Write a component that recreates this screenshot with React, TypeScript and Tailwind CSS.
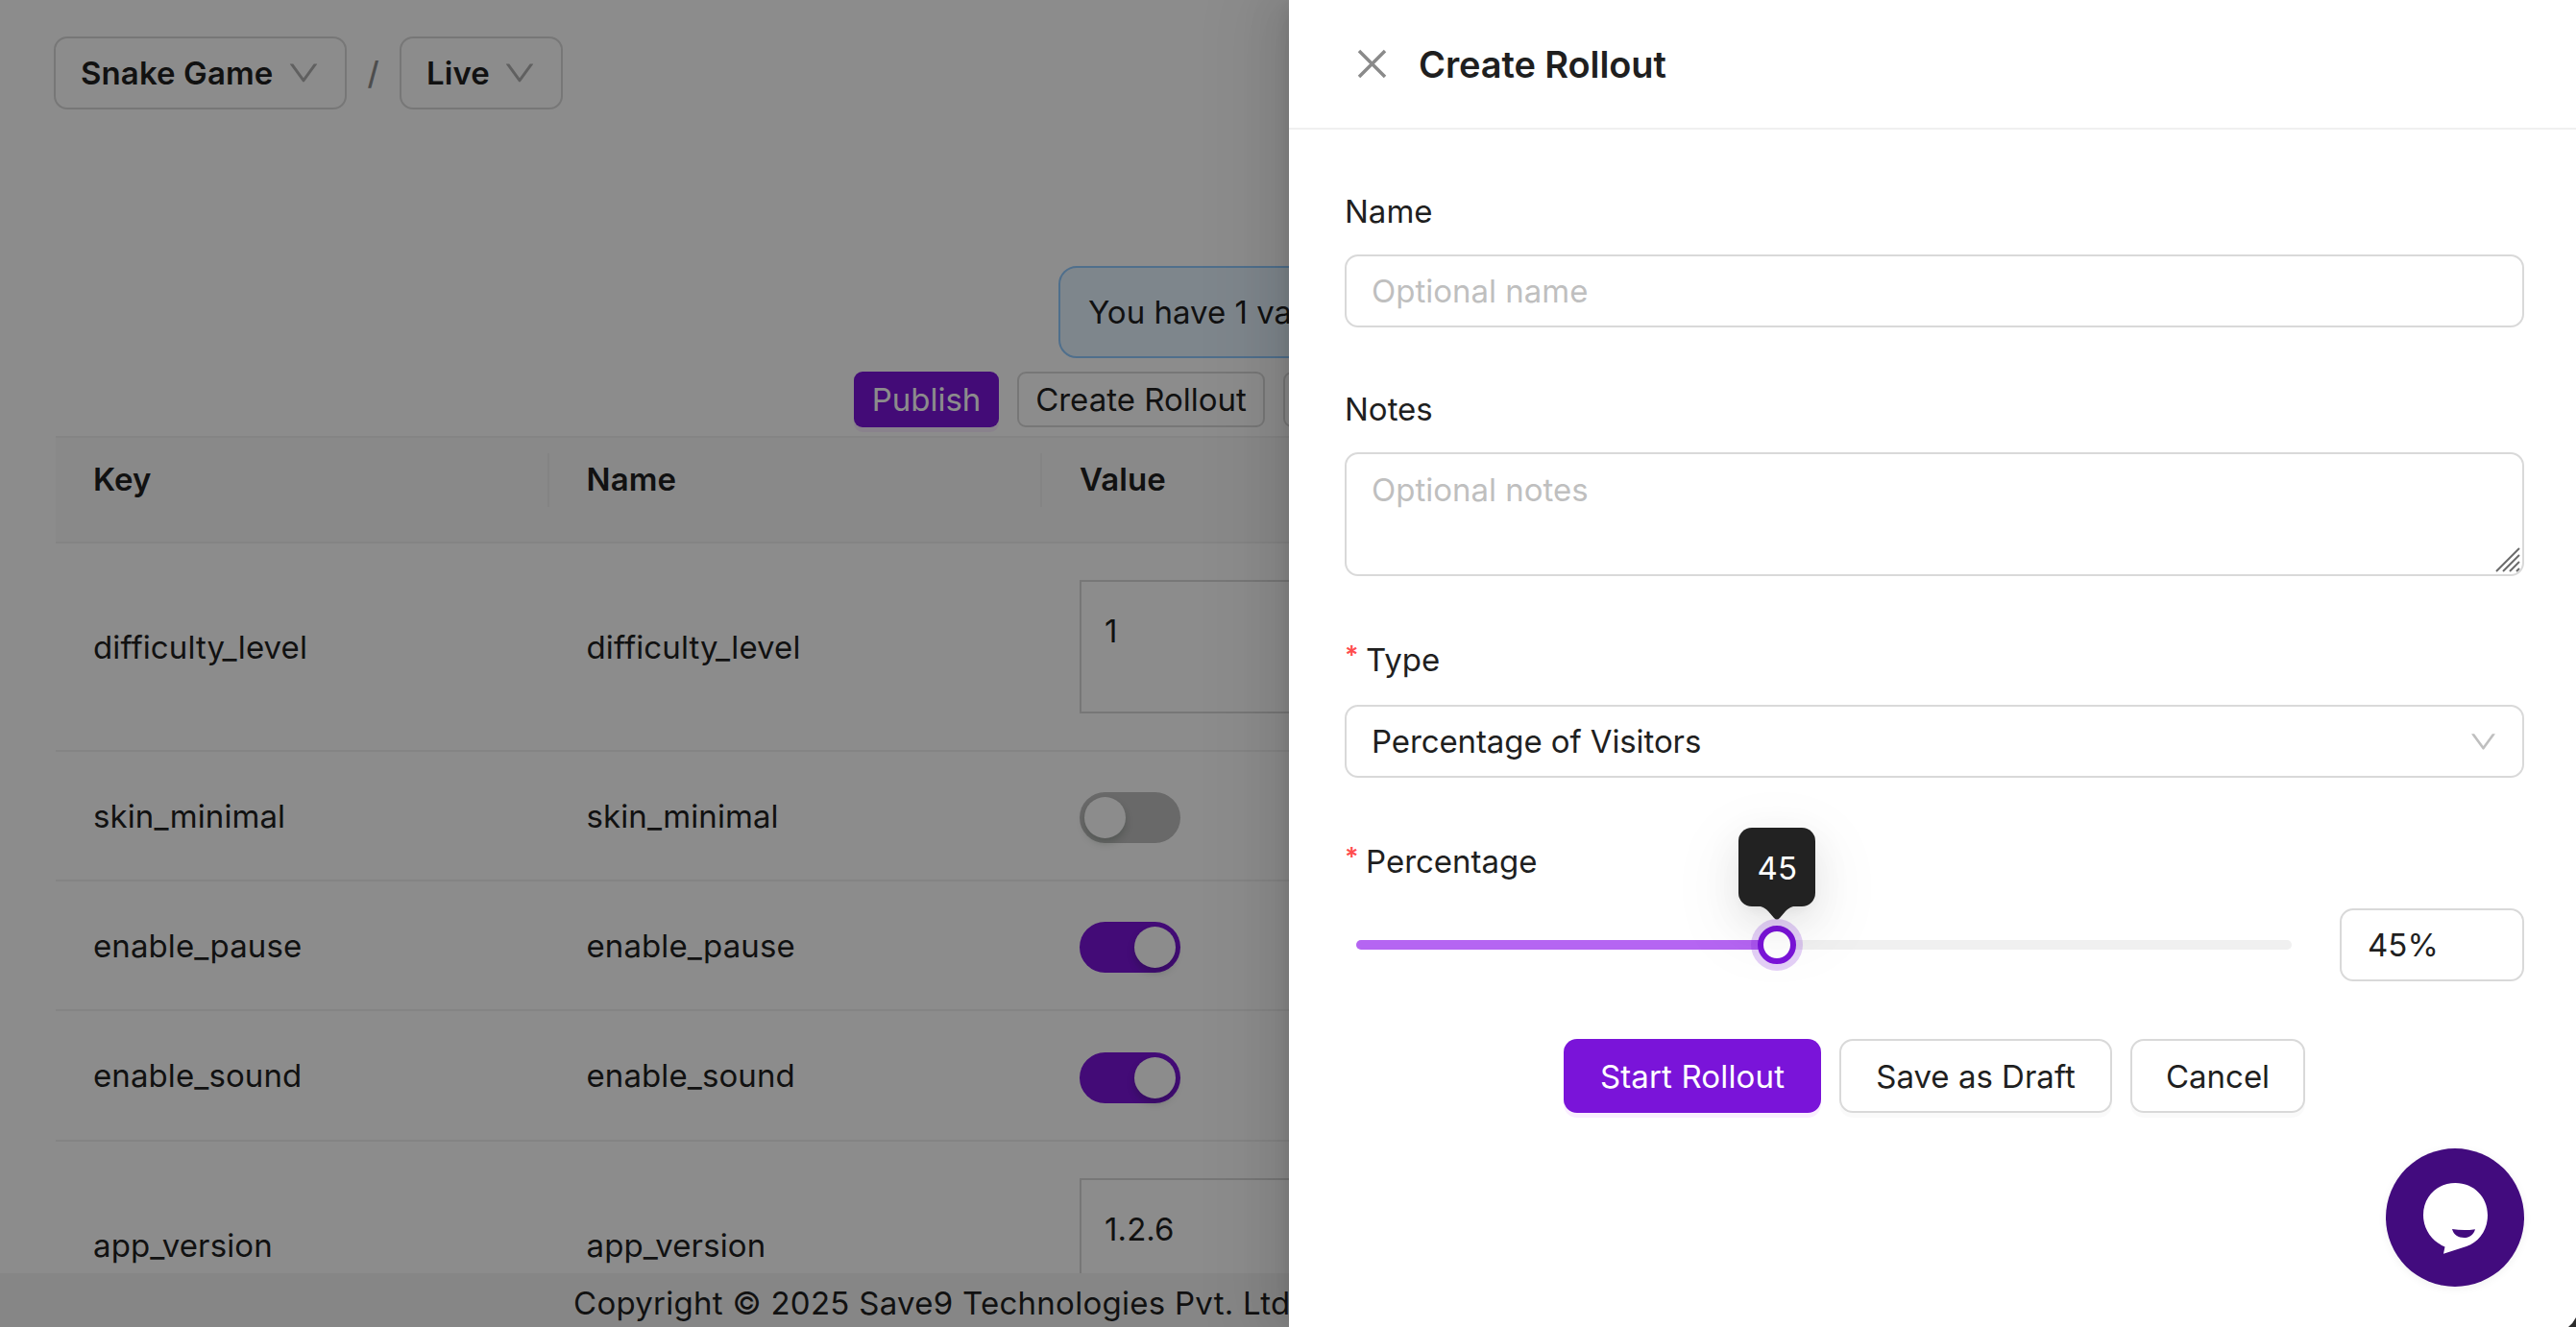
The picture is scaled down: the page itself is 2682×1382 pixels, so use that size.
import React, { useState } from 'react';
import { AiOutlineDown } from 'react-icons/ai';

const rows = [
  { key: 'difficulty_level', type: 'text', value: '1', height: 'h-[217px]' },
  { key: 'skin_minimal', type: 'switch', value: false, height: 'h-[135px]' },
  { key: 'enable_pause', type: 'switch', value: true, height: 'h-[135px]' },
  { key: 'enable_sound', type: 'switch', value: true, height: 'h-[136px]' },
  { key: 'app_version', type: 'text', value: '1.2.6', height: 'h-[217px]' },
];

function Dropdown({ label, width }: { label: string; width: string }) {
  return (
    <button
      className={`flex h-[76px] items-center justify-between rounded-[14px] border-2 border-[#d9d9d9] pr-6 pl-[26px] font-semibold tracking-[0.1px] ${width}`}
    >
      {label}
      <AiOutlineDown size={38} className="shrink-0 text-[#b0b0b0]" />
    </button>
  );
}

function Switch({ checked }: { checked: boolean }) {
  return (
    <div
      className={`mt-1 flex h-[53px] w-[105px] items-center rounded-full px-[5px] ${
        checked ? 'justify-end bg-[#7a14d9]' : 'justify-start bg-[#bfbfbf]'
      }`}
    >
      <div className="size-[43px] rounded-full bg-white shadow-[0_5px_9px_rgba(0,35,11,0.2)]" />
    </div>
  );
}

function Label({ children, required = false }: { children: React.ReactNode; required?: boolean }) {
  return (
    <div className="flex h-[50px] items-center">
      {required && (
        <span className="mr-2.5 h-[50px] w-3 text-[27px] leading-[42px] font-semibold text-[#ff4d4f]">*</span>
      )}
      {children}
    </div>
  );
}

function ConfigTable() {
  return (
    <div className="mt-[9px] ml-[58px] w-[2566px] tracking-[0.1px]">
      <div className="flex h-28 border-y-2 border-[#f0f0f0] bg-[#fafafa] font-semibold">
        {['Key', 'Name', 'Value'].map((title) => (
          <div key={title} className="flex w-[513.5px] justify-between pt-4">
            <span className="pl-[39px] leading-[54px]">{title}</span>
            <span className="h-14 w-0.5 bg-[#f0f0f0]" />
          </div>
        ))}
      </div>
      {rows.map((row) => (
        <div key={row.key} className={`flex items-center border-b-2 border-[#f0f0f0] ${row.height}`}>
          <div className="w-[513.5px] pl-[39px]">{row.key}</div>
          <div className="w-[513.5px] pl-[39px]">{row.key}</div>
          <div className="pl-[39px]">
            {row.type === 'text' ? (
              <div className="h-[139px] w-[600px] border-2 border-[#d9d9d9] px-6 pt-[25px] leading-[52px]">
                {row.value}
              </div>
            ) : (
              <Switch checked={row.value as boolean} />
            )}
          </div>
        </div>
      ))}
    </div>
  );
}

function PercentSlider({ value }: { value: number }) {
  return (
    <div className="relative ml-3 h-2.5 w-[974px] rounded-full bg-[#f0f0f0]">
      <div className="h-2.5 rounded-full bg-[#b565f2]" style={{ width: `${value}%` }} />
      <div
        className="absolute top-1/2 size-10 -translate-x-1/2 -translate-y-1/2 rounded-full border-[6px] border-[#7a14d9] bg-white shadow-[0_0_0_7px_rgba(122,20,217,0.2)]"
        style={{ left: `${value}%` }}
      />
      <div
        className="absolute -top-[117px] flex h-[82px] w-20 -translate-x-1/2 items-center justify-center rounded-[14px] bg-[#222] pt-0.5 text-white shadow-[0_14px_38px_rgba(0,0,0,0.08),0_7px_14px_-9px_rgba(0,0,0,0.12),0_21px_66px_19px_rgba(0,0,0,0.04)]"
        style={{ left: `${value}%` }}
      >
        {value}
        <svg className="absolute top-[82px]" width="34" height="14" viewBox="0 0 34 14">
          <path d="M0 0H34C30 1 28 3 26 5L20 12Q17 15 14 12L8 5C6 3 4 1 0 0Z" fill="#222" />
        </svg>
      </div>
    </div>
  );
}

function RolloutDrawer() {
  const [percentage] = useState(45);

  return (
    <aside className="absolute inset-y-0 right-0 w-[1340px] bg-white shadow-[-14px_0_38px_rgba(0,0,0,0.08),-7px_0_14px_-9px_rgba(0,0,0,0.12),-21px_0_66px_19px_rgba(0,0,0,0.05)]">
      <header className="flex h-[135px] items-center border-b-2 border-[#f0f0f0] pl-[71px]">
        <svg width="31" height="31" viewBox="0 0 31 31" fill="none" stroke="#8a8a8a" strokeWidth="3.5">
          <path d="M2 2L29 29M29 2L2 29" />
        </svg>
        <h2 className="ml-[33px] text-[38px] font-semibold tracking-[-0.1px]">Create Rollout</h2>
      </header>

      <form className="pt-[60px] pr-[54px] pl-[58px]">
        <Label>Name</Label>
        <input
          className="mt-5 block h-[76px] w-full rounded-[14px] border-2 border-[#d9d9d9] px-[26px] placeholder:text-[#bfbfbf]"
          placeholder="Optional name"
        />

        <div className="mt-[60px]">
          <Label>Notes</Label>
          <div className="relative mt-5">
            <textarea
              className="block h-[129px] w-full resize-none rounded-[14px] border-2 border-[#d9d9d9] px-[26px] pt-[11px] leading-[52px] placeholder:text-[#bfbfbf]"
              placeholder="Optional notes"
            />
            {/* Resize grip */}
            <svg
              className="absolute right-1 bottom-1"
              width="26"
              height="26"
              viewBox="0 0 26 26"
              stroke="#6b6b6b"
              strokeWidth="2"
            >
              <path d="M1 25L25 1M8 25L25 8M15 25L25 15M22 25L25 22" />
            </svg>
          </div>
        </div>

        <div className="mt-[62px]">
          <Label required>Type</Label>
          <div className="mt-[22px] flex h-[76px] items-center justify-between rounded-[14px] border-2 border-[#d9d9d9] pr-6 pl-[26px] tracking-[-0.1px]">
            Percentage of Visitors
            <AiOutlineDown size={33} className="text-[#bfbfbf]" />
          </div>
        </div>

        <div className="mt-[62px]">
          <Label required>Percentage</Label>
          <div className="mt-6 flex items-center justify-between">
            <PercentSlider value={percentage} />
            <div className="flex h-[76px] w-48 items-center rounded-[14px] border-2 border-[#d9d9d9] pl-[27px]">
              {percentage}%
            </div>
          </div>
        </div>

        <div className="mt-[60px] flex justify-center gap-[19px]">
          <button
            type="button"
            className="h-[77px] w-[268px] rounded-[14px] bg-[#7a14d9] tracking-[0.15px] text-white shadow-[0_5px_0_rgba(185,5,255,0.07)]"
          >
            Start Rollout
          </button>
          <button
            type="button"
            className="h-[77px] w-[284px] rounded-[14px] border-2 border-[#d9d9d9] shadow-[0_5px_0_rgba(0,0,0,0.02)]"
          >
            Save as Draft
          </button>
          <button
            type="button"
            className="h-[77px] w-[182px] rounded-[14px] border-2 border-[#d9d9d9] shadow-[0_5px_0_rgba(0,0,0,0.02)]"
          >
            Cancel
          </button>
        </div>
      </form>
    </aside>
  );
}

function ChatButton() {
  return (
    <button className="absolute right-[54px] bottom-[42px] size-36 rounded-full bg-[#420b7e] shadow-[0_2px_10px_rgba(0,0,0,0.06)]">
      <svg width="144" height="144" viewBox="0 0 144 144">
        <path
          d="M72.500 36C53.500 36 39 50.500 39 69.500C39 84 48 97 61.500 102.500L60 109.700L84 102C97 97.500 106 85 106 69.500C106 50.500 91.500 36 72.500 36Z"
          fill="#fff"
        />
        <path d="M69 84Q81 86 93 84.200C91.500 90 87 93 81.500 93C75.500 93 70.500 90 69 84Z" fill="#420b7e" />
      </svg>
    </button>
  );
}

export default function App() {
  return (
    <div className="relative flex h-[1382px] w-[2682px] flex-col overflow-hidden bg-white font-['Inter',sans-serif] text-[33px] leading-[52px] text-[#1f1f1f]">
      <main className="h-[1326px] shrink-0 overflow-hidden pt-[38px]">
        <div className="flex items-center pl-14">
          <Dropdown label="Snake Game" width="w-[305px]" />
          <span className="w-[55px] text-center font-medium text-[#8c8c8c]">/</span>
          <Dropdown label="Live" width="w-[170px]" />
        </div>

        <div className="mt-[163px] ml-[1102px] flex h-24 w-[480px] items-center rounded-[19px] border-2 border-[#91caff] bg-[#e6f4ff] pl-[29px]">
          You have 1 va
        </div>

        <div className="mt-3.5 ml-[889px] flex gap-[19px]">
          <button className="h-[58px] w-[151px] rounded-[9px] bg-[#7a14d9] text-white shadow-[0_5px_0_rgba(185,5,255,0.07)]">
            Publish
          </button>
          <button className="h-[58px] w-[258px] rounded-[9px] border-2 border-[#d9d9d9]">Create Rollout</button>
          <button className="h-[58px] w-40 rounded-[9px] border-2 border-[#d9d9d9]" />
        </div>

        <ConfigTable />
      </main>
      <footer className="h-14 shrink-0 bg-[#f5f5f5] pt-[5px] pl-[597px] tracking-[0.27px] whitespace-nowrap">
        Copyright © 2025 Save9 Technologies Pvt. Ltd
      </footer>

      {/* Page mask behind the drawer */}
      <div className="absolute inset-0 bg-black/45" />
      <RolloutDrawer />
      <ChatButton />

      {/* Window corner */}
      <svg className="absolute right-0 bottom-0" width="8" height="10" viewBox="0 0 8 10">
        <path d="M8 0Q5 6 0 10H8Z" fill="#2b2b2b" />
      </svg>
    </div>
  );
}
